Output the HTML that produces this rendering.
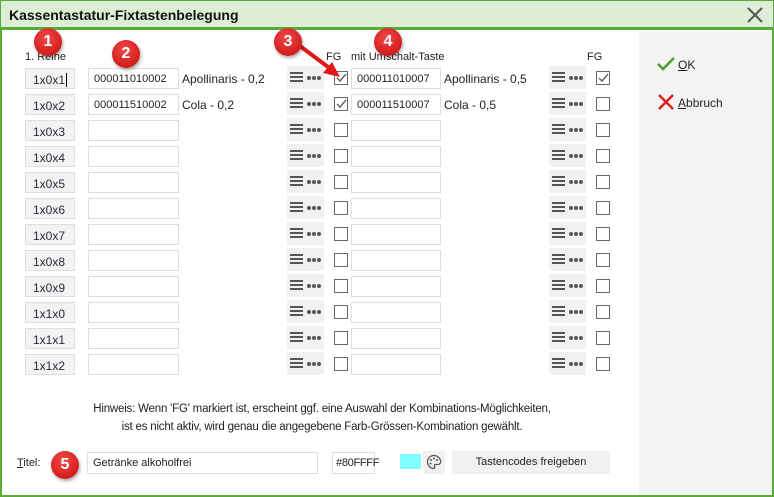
<!DOCTYPE html>
<html><head><meta charset="utf-8"><style>
*{box-sizing:border-box;margin:0;padding:0}
body{width:774px;height:497px;position:relative;background:#fff;font-family:"Liberation Sans",sans-serif;font-size:11px;color:#222;overflow:hidden}
.abs{position:absolute}
.lbl{position:absolute;left:25px;width:50px;height:21px;background:#f3f3f3;border:1px solid #dedede;padding:4px 0 0 7px;color:#2a2a3a;font-size:12px}
.inp{position:absolute;height:21px;background:#fff;border:1px solid #dedede;padding:4px 0 0 5px}
.txt{position:absolute}
.menu{position:absolute;width:37px;height:23px;background:#f1f1f1}
.menu .b{position:absolute;left:3px;width:13px;height:2px;background:#555}
.menu .d{position:absolute;top:10px;width:4px;height:4px;border-radius:2px;background:#555}
.cb{position:absolute;width:14px;height:14px;border:1px solid #666;background:#fff}
.badge{position:absolute;width:28px;height:28px;border-radius:50%;background:radial-gradient(circle at 45% 35%,#f04a4a,#d41c1c 70%,#b01010);color:#fff;font-size:16px;text-align:center;line-height:28px;box-shadow:1px 2px 3px rgba(0,0,0,.35);font-weight:bold}
</style></head><body>
<div class="abs" style="left:0;top:0;width:774px;height:497px;border:2px solid #5aab34;border-top:1px solid #5aab34"></div>
<div class="abs" style="left:1px;top:1px;width:772px;height:29px;background:#deedd6;border-bottom:3px solid #5aab34"></div>
<div class="abs" style="left:9px;top:7px;font-size:14px;font-weight:bold;color:#111">Kassentastatur-Fixtastenbelegung</div>
<svg class="abs" style="left:747px;top:7px" width="16" height="16"><path d="M1 1L15 15M15 1L1 15" stroke="#555" stroke-width="2"/></svg>
<div class="abs" style="left:639px;top:32px;width:133px;height:463px;background:#f3f3f3"></div>
<svg class="abs" style="left:657px;top:57px" width="18" height="14"><path d="M1 7L6 12L17 1" stroke="#4aa032" stroke-width="2.5" fill="none"/></svg>
<div class="abs" style="left:678px;top:58px;font-size:12px"><u>O</u>K</div>
<svg class="abs" style="left:658px;top:94px" width="16" height="16"><path d="M1 1L15 15M15 1L1 15" stroke="#e02020" stroke-width="2.5"/></svg>
<div class="abs" style="left:678px;top:96px;font-size:12px"><u>A</u>bbruch</div>

<div class="txt" style="left:25px;top:51px">1. Reihe</div>
<div class="txt" style="left:326px;top:51px">FG</div>
<div class="txt" style="left:351px;top:51px">mit Umschalt-Taste</div>
<div class="txt" style="left:587px;top:51px">FG</div>

<div id="rows"></div>
<script>
var L=["1x0x1","1x0x2","1x0x3","1x0x4","1x0x5","1x0x6","1x0x7","1x0x8","1x0x9","1x1x0","1x1x1","1x1x2"];
var h="";
for(var i=0;i<12;i++){var c=78+26*i,t=c-10;
var a=i==0?"000011010002":i==1?"000011510002":"";
var b=i==0?"000011010007":i==1?"000011510007":"";
var ta=i==0?"Apollinaris - 0,2":i==1?"Cola - 0,2":"";
var tb=i==0?"Apollinaris - 0,5":i==1?"Cola - 0,5":"";
h+='<div class="lbl" style="top:'+t+'px">'+L[i]+(i==0?'<span style="border-left:1px solid #000;margin-left:1px"></span>':'')+'</div>';
h+='<div class="inp" style="left:88px;width:91px;top:'+t+'px">'+a+'</div>';
h+='<div class="txt" style="left:182px;top:'+(c-6)+'px;font-size:12px">'+ta+'</div>';
function m(x){return '<div class="menu" style="left:'+x+'px;top:'+(c-12)+'px"><div class="b" style="top:6px"></div><div class="b" style="top:10px"></div><div class="b" style="top:14px"></div><div class="d" style="left:20px"></div><div class="d" style="left:25px"></div><div class="d" style="left:30px"></div></div>';}
function cb(x,k){return '<div class="cb" style="left:'+x+'px;top:'+(c-7)+'px">'+(k?'<svg width="12" height="12" style="position:absolute;left:0;top:0"><path d="M2 6L5 9L11 2" stroke="#666" stroke-width="1.5" fill="none"/></svg>':'')+'</div>';}
h+=m(287)+cb(334,i<2);
h+='<div class="inp" style="left:351px;width:90px;top:'+t+'px">'+b+'</div>';
h+='<div class="txt" style="left:444px;top:'+(c-6)+'px;font-size:12px">'+tb+'</div>';
h+=m(549)+cb(596,i==0);
}
document.getElementById("rows").innerHTML=h;
</script>

<div class="txt" style="left:0;width:644px;top:400px;text-align:center;font-size:11.5px;line-height:18px;letter-spacing:-0.2px">Hinweis: Wenn 'FG' markiert ist, erscheint ggf. eine Auswahl der Kombinations-Möglichkeiten,<br>ist es nicht aktiv, wird genau die angegebene Farb-Grössen-Kombination gewählt.</div>
<div class="txt" style="left:17px;top:457px"><u>T</u>itel:</div>
<div class="inp" style="left:87px;width:231px;height:22px;top:452px">Getränke alkoholfrei</div>
<div class="inp" style="left:332px;width:43px;height:22px;top:452px;padding-left:3px;letter-spacing:-0.3px">#80FFFF</div>
<div class="abs" style="left:400px;top:454px;width:21px;height:15px;background:#80ffff"></div>
<div class="abs" style="left:423px;top:451px;width:22px;height:23px;background:#f1f1f1"></div>
<svg class="abs" style="left:426px;top:454px" width="16" height="16"><path d="M8 1.5C4 1.5 1.5 4.5 1.5 8c0 3.5 3 6.5 6 6.5 1.5 0 1.5-1.2 1-2-.6-.9 0-2 1.2-2h2c2 0 3-1.2 3-3C14.5 4.5 11.5 1.5 8 1.5z" stroke="#555" stroke-width="1.2" fill="none"/><circle cx="5" cy="6" r="1" fill="#555"/><circle cx="8" cy="4.5" r="1" fill="#555"/><circle cx="11" cy="6" r="1" fill="#555"/><circle cx="4.5" cy="9.5" r="1" fill="#555"/></svg>
<div class="abs" style="left:452px;top:451px;width:158px;height:23px;background:#f1f1f1;text-align:center;padding-top:5px">Tastencodes freigeben</div>

<svg class="abs" style="left:280px;top:30px" width="80" height="60"><path d="M12 10L52 40" stroke="#e01818" stroke-width="4"/><path d="M60 47L43 43L52 32Z" fill="#e01818"/></svg>
<div class="badge" style="left:34px;top:28px">1</div>
<div class="badge" style="left:112px;top:40px">2</div>
<div class="badge" style="left:274px;top:28px">3</div>
<div class="badge" style="left:374px;top:28px">4</div>
<div class="badge" style="left:51px;top:451px">5</div>
</body></html>
